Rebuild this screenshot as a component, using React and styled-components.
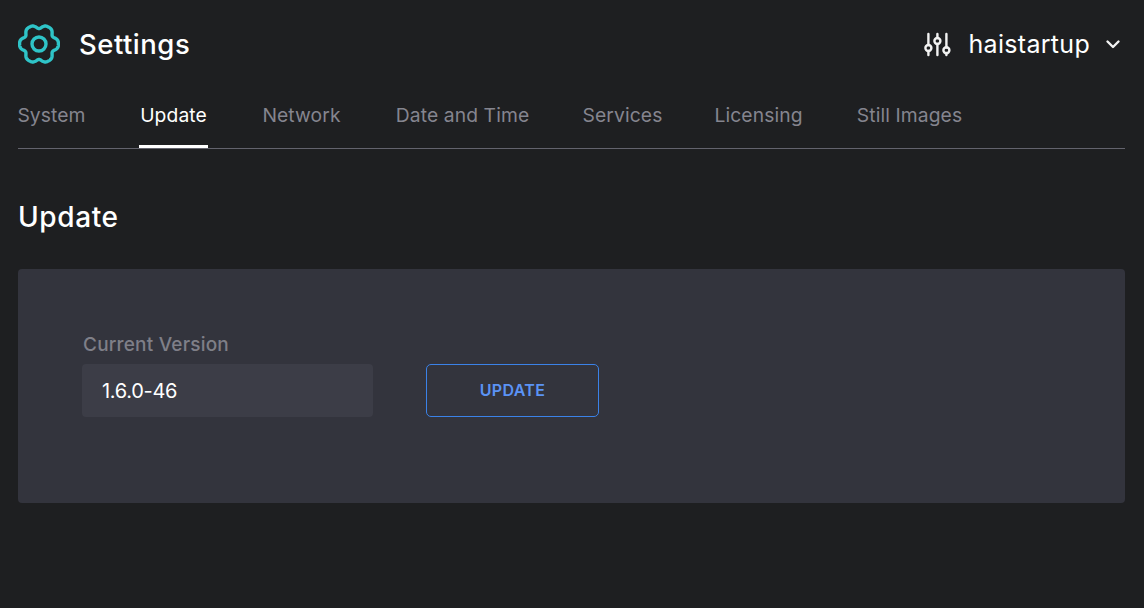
import React from "react";
import styled, { createGlobalStyle } from "styled-components";

const tabs = [
  { label: "System", width: 67 },
  { label: "Update", width: 69 },
  { label: "Network", width: 79 },
  { label: "Date and Time", width: 135 },
  { label: "Services", width: 77 },
  { label: "Licensing", width: 87 },
  { label: "Still Images", width: 107 },
];

// six broad lobes with narrow dips round the cog
const cogPoints = [];
for (let i = 0; i < 240; i++) {
  const a = (i / 240) * Math.PI * 2;
  const r = 17.9 + 2 * Math.cos(6 * a) - 0.45 * Math.cos(12 * a);
  cogPoints.push(`${(21 + r * Math.cos(a)).toFixed(2)},${(21 + r * Math.sin(a)).toFixed(2)}`);
}
const cogPath = `M${cogPoints.join("L")}Z`;

const GlobalStyle = createGlobalStyle`
  html, body {
    margin: 0;
    padding: 0;
    background: #1e1f21;
  }
  body {
    font-family: "Inter", "Liberation Sans", sans-serif;
    color: #fff;
  }
`;

const Page = styled.div`
  min-height: 608px;
  padding: 0 19px 0 18px;
  box-sizing: border-box;
  background: #1e1f21;
`;

const Header = styled.header`
  display: flex;
  align-items: center;
  justify-content: space-between;
  height: 88px;
`;

const Brand = styled.div`
  display: flex;
  align-items: center;
  gap: 19px;
`;

const Title = styled.h1`
  margin: 0;
  font-size: 27.5px;
  font-weight: 500;
  letter-spacing: 0.5px;
`;

const UserMenu = styled.div`
  display: flex;
  align-items: center;
  padding-right: 4px;
`;

const UserName = styled.span`
  margin: 0 15px 0 17px;
  font-size: 25px;
  font-weight: 400;
  letter-spacing: 0.3px;
`;

const TabBar = styled.nav`
  display: flex;
  gap: 54px;
  height: 60px;
  border-bottom: 1px solid #63636d;
`;

const Tab = styled.div`
  width: ${(p) => p.$width}px;
  height: 60px;
  padding-top: 15px;
  box-sizing: border-box;
  display: flex;
  justify-content: center;
  white-space: nowrap;
  font-size: 19.3px;
  line-height: 24px;
  letter-spacing: 0.1px;
  color: ${(p) => (p.$active ? "#fff" : "#85858f")};
  border-bottom: ${(p) => (p.$active ? "3px solid #fff" : "none")};
`;

const SectionTitle = styled.h2`
  margin: 52px 0 36px;
  font-size: 28px;
  line-height: 32px;
  font-weight: 500;
  letter-spacing: 0.6px;
`;

const Panel = styled.section`
  height: 234px;
  box-sizing: border-box;
  padding: 64px 64px 0;
  background: #33343d;
  border-radius: 4px;
  display: flex;
  align-items: flex-start;
  gap: 53px;
`;

const Field = styled.div`
  display: flex;
  flex-direction: column;
  gap: 7px;
`;

const Label = styled.label`
  font-size: 19px;
  line-height: 24px;
  font-weight: 500;
  letter-spacing: 0.2px;
  margin-left: 1px;
  color: #7f7f88;
`;

const Value = styled.div`
  width: 291px;
  height: 53px;
  padding-left: 20px;
  box-sizing: border-box;
  display: flex;
  align-items: center;
  background: #3c3d47;
  border-radius: 4px;
  font-size: 20px;
  letter-spacing: -0.3px;
`;

const UpdateButton = styled.button`
  width: 173px;
  height: 53px;
  margin-top: 31px;
  padding: 0 0 2px;
  background: transparent;
  border: 1px solid #3b82e8;
  border-radius: 5px;
  color: #5b93f5;
  font-family: inherit;
  font-size: 16px;
  font-weight: 600;
  letter-spacing: 0.35px;
`;

const CogIcon = () => (
  <svg width="42" height="42" viewBox="0 0 42 42" fill="none" stroke="#2fc4c8" strokeWidth="3.4">
    <path d={cogPath} strokeLinejoin="round" />
    <circle cx="21" cy="21" r="7" />
  </svg>
);

const SlidersIcon = () => (
  <svg width="28" height="28" viewBox="0 0 28 28" fill="none" stroke="#f2f2f2" strokeWidth="2.4" strokeLinecap="round">
    <path d="M4.4 4v11M4.4 21v4M13.4 4v4M13.4 14v11M22.4 4v13.5M22.4 23v2" />
    <circle cx="4.4" cy="18" r="3" />
    <circle cx="13.4" cy="11" r="3" />
    <circle cx="22.4" cy="20.3" r="3" />
  </svg>
);

const ChevronIcon = () => (
  <svg width="16" height="16" viewBox="0 0 16 16" fill="none" stroke="#f2f2f2" strokeWidth="2.4" strokeLinecap="round" strokeLinejoin="round">
    <path d="M2.5 5.5 8 11l5.5-5.5" />
  </svg>
);

const App = () => (
  <Page>
    <GlobalStyle />
    <Header>
      <Brand>
        <CogIcon />
        <Title>Settings</Title>
      </Brand>
      <UserMenu>
        <SlidersIcon />
        <UserName>haistartup</UserName>
        <ChevronIcon />
      </UserMenu>
    </Header>
    <TabBar>
      {tabs.map((t) => (
        <Tab key={t.label} $width={t.width} $active={t.label === "Update"}>{t.label}</Tab>
      ))}
    </TabBar>
    <SectionTitle>Update</SectionTitle>
    <Panel>
      <Field>
        <Label>Current Version</Label>
        <Value>1.6.0-46</Value>
      </Field>
      <UpdateButton>UPDATE</UpdateButton>
    </Panel>
  </Page>
);

export default App;
